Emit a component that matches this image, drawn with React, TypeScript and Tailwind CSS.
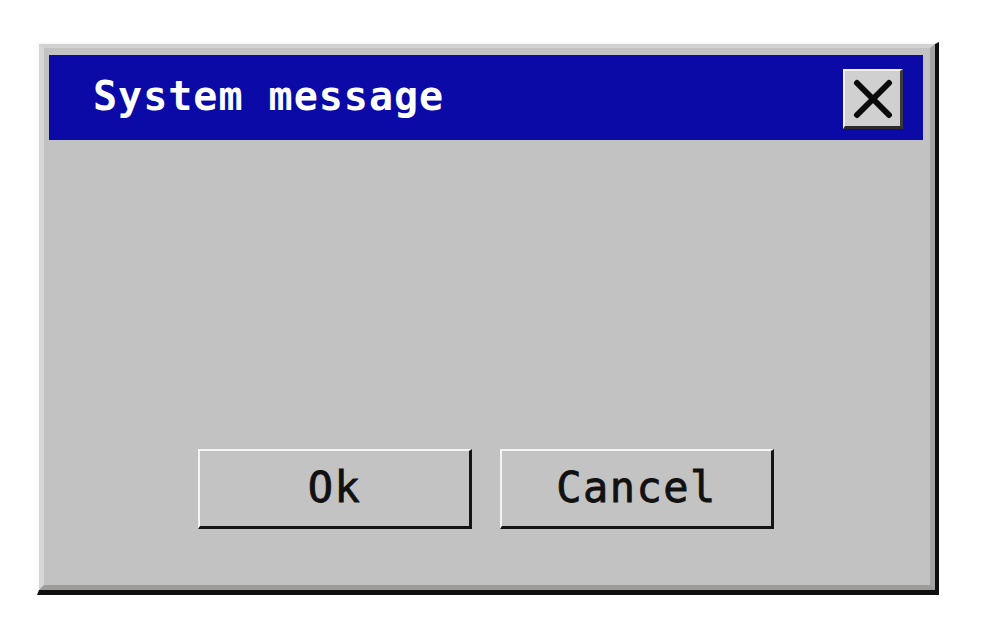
const mono = { fontFamily: '"DejaVu Sans Mono", "Liberation Mono", monospace' };

const DialogButton = ({ label }: { label: string }) => (
  <button
    className="w-[274px] h-[80px] bg-[#c3c3c3] border-t-2 border-l-2 border-t-[#f4f4f4] border-l-[#f4f4f4] border-b-[3px] border-r-[3px] border-b-[#141414] border-r-[#141414] flex items-center justify-center text-[42px] font-normal text-[#111] tracking-[1.5px] leading-none pb-[2px]"
    style={{ ...mono, WebkitTextStroke: "0.8px #111" }}
  >
    {label}
  </button>
);

export default function App() {
  return (
    <div className="w-[988px] h-[628px] bg-white pt-[42px] pl-[37px]">
      <div className="w-[902px] h-[553px] flex flex-col bg-[#c2c2c2] border-t-2 border-l-2 border-t-[#fafafa] border-l-[#fafafa] border-b-[5px] border-r-[4px] border-b-[#101010] border-r-[#101010]">
        <div className="flex-1 flex flex-col border-t-[4px] border-l-[5px] border-t-[#d2d2d2] border-l-[#d6d6d6] border-b-[5px] border-r-[5px] border-b-[#9e9c9a] border-r-[#a4a4a4] pt-[7px] pl-[5px] pr-[7px]">
          <div className="h-[85px] bg-[#0b0aa6] flex items-center justify-between pl-[44px] pr-[20px]">
            <span
              className="text-white text-[40px] font-bold tracking-[1px] leading-none pb-[4px]"
              style={mono}
            >
              System message
            </span>
            <div className="w-[60px] h-[60px] mt-[3px] bg-[#d0d0d0] border-t-2 border-l-2 border-t-[#f2f2f2] border-l-[#f2f2f2] border-b-[3px] border-r-[3px] border-b-[#2a2a2a] border-r-[#3a3a3a] flex items-center justify-center">
              <svg width="40" height="40" viewBox="0 0 40 40">
                <path
                  d="M4 4 L36 36 M36 4 L4 36"
                  stroke="#0a0a0a"
                  strokeWidth="6"
                  strokeLinecap="round"
                />
              </svg>
            </div>
          </div>
          <div className="flex-1 flex items-end justify-center gap-[28px] pb-[56px]">
            <DialogButton label="Ok" />
            <DialogButton label="Cancel" />
          </div>
        </div>
      </div>
    </div>
  );
}
